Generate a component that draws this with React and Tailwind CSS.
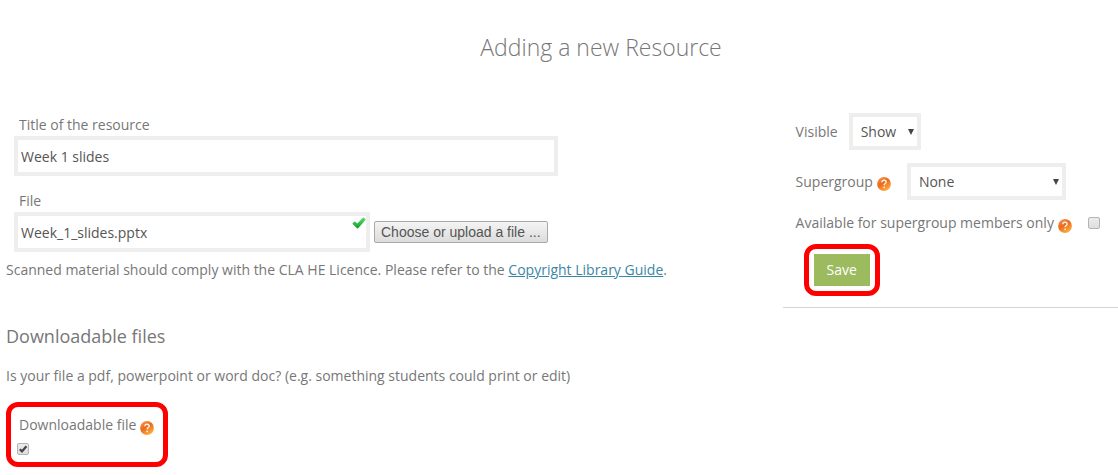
import React, { useState } from "react";

const HelpIcon = () => (
  <svg width="14" height="14" viewBox="0 0 14 14" role="img" aria-label="Help" className="shrink-0">
    <defs>
      <linearGradient id="help-fill" x1="0" y1="0" x2="0.6" y2="1">
        <stop offset="0" stopColor="#f3a163" />
        <stop offset="0.5" stopColor="#ea6a1c" />
        <stop offset="1" stopColor="#ffab3c" />
      </linearGradient>
    </defs>
    <circle cx="7" cy="7" r="6.9" fill="url(#help-fill)" />
    <path
      d="M4.8 5.3C4.8 3.9 5.8 3.3 7 3.3C8.3 3.3 9.2 4 9.2 5.1C9.2 6.5 7.1 6.6 7.1 8.3"
      fill="none"
      stroke="#fff3e8"
      strokeWidth="1.4"
    />
    <circle cx="7.1" cy="10.3" r="0.9" fill="#fff3e8" />
  </svg>
);

const TickIcon = () => (
  <svg width="14" height="12" viewBox="0 0 14 12" aria-hidden="true">
    <defs>
      <linearGradient id="tick-fill" x1="0" y1="0" x2="0" y2="1">
        <stop offset="0" stopColor="#5ad86a" />
        <stop offset="1" stopColor="#12a22c" />
      </linearGradient>
    </defs>
    <path
      d="M1.4 6.6L2.8 5.4L5.4 7.6L11.4 1.4L12.8 2.4L5.6 10.6Z"
      fill="url(#tick-fill)"
      stroke="url(#tick-fill)"
      strokeWidth="1.6"
      strokeLinejoin="round"
    />
  </svg>
);

const SelectBox = ({ id, className, children, ...props }) => (
  <div className="relative">
    <select
      id={id}
      className={`block h-[37px] appearance-none border-4 border-[#eeeeee] bg-white pl-2 text-[#555555] outline-none ${className}`}
      {...props}
    >
      {children}
    </select>
    <svg
      width="6"
      height="6"
      viewBox="0 0 6 6"
      aria-hidden="true"
      className="pointer-events-none absolute top-4 right-[7px]"
    >
      <path d="M0 0H6L3 6Z" fill="#444" />
    </svg>
  </div>
);

const CheckBox = ({ id, checked, onChange }) => (
  <span className="relative block size-3">
    <input
      id={id}
      type="checkbox"
      checked={checked}
      onChange={onChange}
      className="block size-3 appearance-none rounded-xs border border-[#b4b4b4] bg-linear-to-b from-[#ececec] to-[#dedede]"
    />
    {checked && (
      <svg
        width="12"
        height="12"
        viewBox="0 0 12 12"
        aria-hidden="true"
        className="pointer-events-none absolute inset-0"
      >
        <path d="M2.8 6.2L5 8.4L9.4 3.2" fill="none" stroke="#444" strokeWidth="2.2" />
      </svg>
    )}
  </span>
);

const App = () => {
  const [form, setForm] = useState({
    title: "Week 1 slides",
    file: "Week_1_slides.pptx",
    visible: "show",
    supergroup: "none",
    membersOnly: false,
    downloadable: true,
  });

  const handleChange = (e) => {
    const { id, type, value, checked } = e.target;
    setForm((prev) => ({ ...prev, [id]: type === "checkbox" ? checked : value }));
  };

  return (
    <form
      onSubmit={(e) => e.preventDefault()}
      className="bg-white font-['Open_Sans','Noto_Sans',sans-serif] text-sm text-[#777777]"
    >
      <h1 className="pt-[31px] pl-[84px] text-center text-[23px] leading-8 font-light">
        Adding a new Resource
      </h1>

      <div className="mt-[50px] grid grid-cols-[7fr_3fr]">
        <div className="pl-[6px]">
          <div className="pl-2">
            <label htmlFor="title" className="block pl-[5px] leading-[23px]">
              Title of the resource
            </label>
            <input
              id="title"
              type="text"
              value={form.title}
              onChange={handleChange}
              className="block h-10 w-[544px] max-w-full border-4 border-[#eeeeee] px-[3px] text-[#555555] outline-none"
            />

            <label htmlFor="file" className="mt-[13px] block pl-[5px] leading-[23px]">
              File
            </label>
            <div className="flex items-center gap-1">
              <div className="relative">
                <input
                  id="file"
                  type="text"
                  value={form.file}
                  onChange={handleChange}
                  className="block h-10 w-[356px] border-4 border-[#eeeeee] pr-6 pl-[3px] text-[#555555] outline-none"
                />
                <span className="absolute top-[5px] right-1">
                  <TickIcon />
                </span>
              </div>
              <button
                type="button"
                className="h-[22px] rounded-xs border border-[#a9a9a9] bg-linear-to-b from-[#f4f4f4] to-[#dcdcdc] px-[6px] font-['Liberation_Sans',sans-serif] leading-5 whitespace-nowrap text-[#555555]"
              >
                Choose or upload a file ...
              </button>
            </div>
          </div>

          <p className="mt-2 leading-5">
            Scanned material should comply with the CLA HE Licence. Please refer to the{" "}
            <a href="#guide" className="text-[#3a87a4] underline">
              Copyright Library Guide
            </a>
            .
          </p>

          <h2 className="mt-11 text-lg leading-6">Downloadable files</h2>
          <p className="mt-4 leading-6">
            Is your file a pdf, powerpoint or word doc? (e.g. something students could print or edit)
          </p>

          <div className="mt-[14px] h-[65px] w-[162px] rounded-xl border-5 border-[#ff0000] pt-2 pl-[6px]">
            <div className="flex items-center gap-1 pl-[2px] leading-5">
              <label htmlFor="downloadable">Downloadable file</label>
              <span className="pt-[5px]">
                <HelpIcon />
              </span>
            </div>
            <div className="mt-2">
              <CheckBox id="downloadable" checked={form.downloadable} onChange={handleChange} />
            </div>
          </div>
        </div>

        <div>
          <div className="border-b border-[#d5d5d5] pb-[11px] pl-[13px]">
            <div className="flex items-center gap-[11px]">
              <label htmlFor="visible">Visible</label>
              <SelectBox id="visible" className="w-[72px]" value={form.visible} onChange={handleChange}>
                <option value="show">Show</option>
                <option value="hide">Hide</option>
              </SelectBox>
            </div>

            <div className="mt-[13px] flex items-center">
              <label htmlFor="supergroup" className="mr-1">
                Supergroup
              </label>
              <span className="mr-4 pt-[5px]">
                <HelpIcon />
              </span>
              <SelectBox id="supergroup" className="w-[159px]" value={form.supergroup} onChange={handleChange}>
                <option value="none">None</option>
              </SelectBox>
            </div>

            <div className="mt-[13px] flex items-center whitespace-nowrap">
              <label htmlFor="membersOnly" className="mr-1">
                Available for supergroup members only
              </label>
              <span className="mr-4 pt-[5px]">
                <HelpIcon />
              </span>
              <CheckBox id="membersOnly" checked={form.membersOnly} onChange={handleChange} />
            </div>

            <div className="mt-[11px] ml-2 w-fit rounded-xl border-5 border-[#ff0000] p-[5px]">
              <button type="submit" className="block h-8 bg-[#9bbb5e] px-[13px] text-white">
                Save
              </button>
            </div>
          </div>
        </div>
      </div>
    </form>
  );
};

export default App;
